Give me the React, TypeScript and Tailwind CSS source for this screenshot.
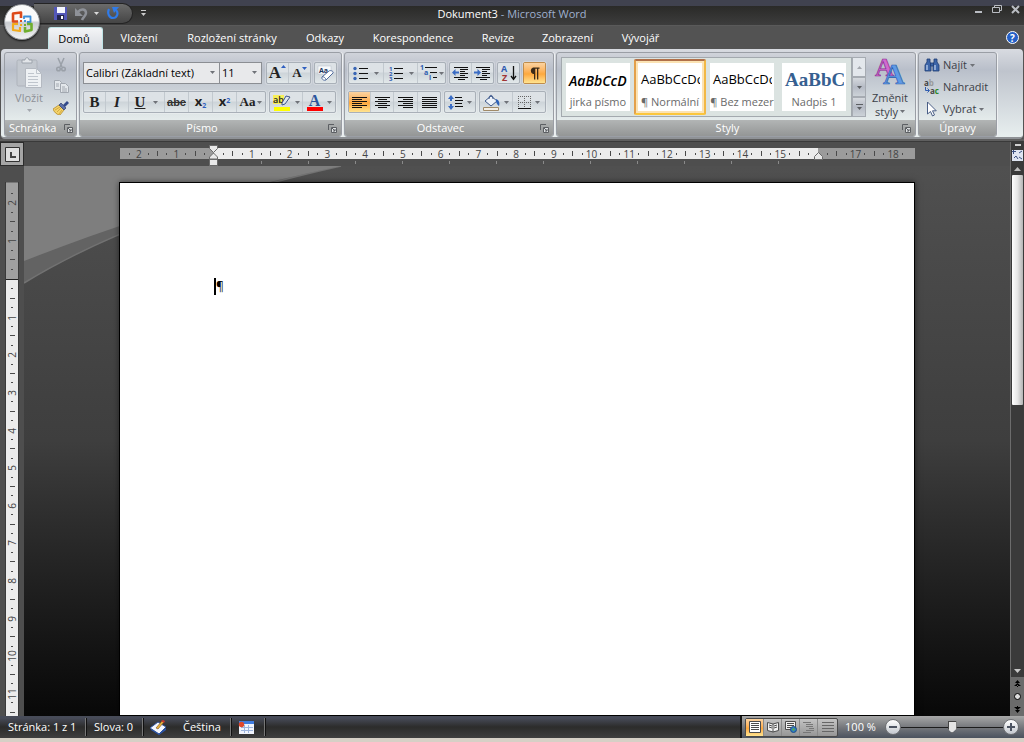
import type { ReactNode } from "react";
import clsx from "clsx";

const TABS = ["Domů", "Vložení", "Rozložení stránky", "Odkazy", "Korespondence", "Revize", "Zobrazení", "Vývojář"];
const TAB_WIDTHS = ["w-[55px]", "w-[75px]", "w-[111px]", "w-[75px]", "w-[101px]", "w-[69px]", "w-[70px]", "w-[76px]"];

const BTN_GROUP = "flex h-[22px] rounded-[2px] border border-[#a9b0b8] bg-linear-to-b from-[#dde2e6] from-45% via-[#cdd4d9] via-50% to-[#e2e8ea] shadow-[0_0_0_1px_rgba(255,255,255,0.25)]";
const ACTIVE = "bg-linear-to-b from-[#fbd3a0] via-[#fda83c] via-55% to-[#ffe48f]";

function Arrow({ className = "fill-[#6f7278]" }: { className?: string }) {
  return (
    <svg width="5" height="3" viewBox="0 0 5 3" className={clsx("shrink-0", className)}>
      <path d="M0 0h5L2.500 3z" />
    </svg>
  );
}

function Btn({ label, w, active, arrow, last, children }: { label: string; w: string; active?: boolean; arrow?: boolean; last?: boolean; children: ReactNode }) {
  return (
    <button
      aria-label={label}
      title={label}
      className={clsx("flex h-full shrink-0 items-center justify-center gap-1", w, !last && "border-r border-[#c2c9cf]", active && ACTIVE)}
    >
      {children}
      {arrow && <Arrow />}
    </button>
  );
}

function Group({ title, className, launcher = true, children }: { title: string; className: string; launcher?: boolean; children: ReactNode }) {
  return (
    <section className={clsx("flex shrink-0 flex-col overflow-hidden rounded-[3px] border border-[#9a9ea5] bg-linear-to-b from-[#d0d3da] from-0% via-[#b9bfca] via-20% to-[#e4ebeb] to-80% shadow-[1px_0_0_#eef0f2]", className)}>
      <div className="min-h-0 flex-1">{children}</div>
      <div className="flex h-4 items-center bg-linear-to-b from-[#b2b5b5] to-[#949696] px-1 text-white">
        <span className={clsx("flex-1 text-center", launcher && "pr-2")}>{title}</span>
        {launcher && (
          <button aria-label={`${title} – další možnosti`}>
            <svg width="9" height="9" viewBox="0 0 9 9" fill="none" stroke="#5c5f63">
              <path d="M.5 6V.5H6" />
              <path d="M3.500 3.500h5v5h-5z" fill="#dfe2e4" />
              <path d="M4 4l3 3M7 5v2H5" />
            </svg>
          </button>
        )}
      </div>
    </section>
  );
}

function Lines({ widths, align = "left" }: { widths: number[]; align?: "left" | "center" | "right" }) {
  return (
    <svg width="15" height="13" viewBox="0 0 15 13" fill="#111" shapeRendering="crispEdges">
      {widths.map((w, i) => (
        <rect key={i} x={align === "left" ? 0 : align === "right" ? 15 - w : Math.floor((15 - w) / 2)} y={i * 2 + 1} width={w} height="1" />
      ))}
    </svg>
  );
}

function ListIcon({ marks }: { marks: string[] }) {
  return (
    <svg width="15" height="15" viewBox="0 0 15 15" className="overflow-visible">
      {marks.map((m, i) =>
        m === "•" ? (
          <circle key={i} cx="2" cy={2.5 + i * 5} r="1.700" fill="#3a66b5" />
        ) : (
          <text key={i} x="1" y={5 + i * 5} fontSize="6" fontWeight="700" fill="#2f5cb0">{m}</text>
        )
      )}
      <path d="M6 2.500h9M6 7.500h9M6 12.500h9" stroke="#111" />
    </svg>
  );
}

function IndentIcon({ right }: { right?: boolean }) {
  return (
    <svg width="17" height="15" viewBox="0 0 17 15">
      <path d="M2 1.500h14M8 3.500h8M8 5.500h5M8 7.500h8M8 9.500h5M2 11.500h14M6 13.500h7" stroke="#111" />
      <path d={right ? "M7 6.500L3.500 3v2.500H0v2h3.500V10z" : "M0 6.500L3.500 3v2.500H7v2H3.500V10z"} fill="#3a6cc4" />
    </svg>
  );
}

function ClipboardGroup() {
  return (
    <Group title="Schránka" className="w-[73px]">
      <div className="flex h-full">
        <button className="flex w-12 flex-col items-center pt-1 text-[#8d9096]">
          <svg width="28" height="32" viewBox="0 0 28 32">
            <rect x="2" y="3" width="20" height="26" rx="1.500" fill="#c3c8cf" stroke="#aeb3bb" />
            <path d="M7 6V3h3c0-3 4-3 4 0h3v3z" fill="#e2e5e9" stroke="#9da3ac" />
            <path d="M10.500 11.500h11l5 5v14h-16z" fill="#eef1f4" stroke="#b4b9c1" />
            <path d="M21.500 11.500v5h5M13 16.500h6M13 19.500h10M13 22.500h10M13 25.500h10M13 28.500h10" fill="none" stroke="#bfc5cd" />
          </svg>
          <span className="mt-[2px] leading-[14px]">Vložit</span>
          <Arrow className="mt-1 fill-[#a3a7ad]" />
        </button>
        <div className="flex flex-col items-center gap-2 pt-1">
          <button aria-label="Vyjmout">
            <svg width="14" height="15" viewBox="0 0 14 15" fill="none" stroke="#9aa0a8" strokeWidth="1.500">
              <path d="M4 1l4 9M10 1L6 10" />
              <circle cx="4.500" cy="12" r="1.800" />
              <circle cx="9.500" cy="12" r="1.800" />
            </svg>
          </button>
          <button aria-label="Kopírovat">
            <svg width="15" height="13" viewBox="0 0 15 13" fill="#e3e7eb" stroke="#a2a8b0">
              <path d="M.5.5h5l2 2v7h-7z" />
              <path d="M6.500 3.500h5l3 3v6h-8zM8 7h3M8 9h5M8 11h5M2 4h3M2 6h3" />
            </svg>
          </button>
          <button aria-label="Kopírovat formát">
            <svg width="16" height="14" viewBox="0 0 16 14">
              <path d="M0 8l6-4 5 5-4 5c-3 0-6-3-7-6z" fill="#f3d36b" stroke="#b58a28" strokeWidth=".8" />
              <path d="M2 9l5-3M4 11l4-4M6 13l3-4" stroke="#c7982f" strokeWidth=".7" />
              <path d="M6 4l2-2 5 5-2 2z" fill="#5b6fa8" stroke="#2f3f70" strokeWidth=".7" />
              <path d="M10 4l4-4 2 2-4 4z" fill="#324a8a" />
            </svg>
          </button>
        </div>
      </div>
    </Group>
  );
}

function Combo({ label, value, className }: { label: string; value: string; className: string }) {
  return (
    <div className={clsx("relative h-[22px] border border-[#8b8e93] bg-[#e8e9eb]", className)}>
      <select aria-label={label} className="h-full w-full appearance-none bg-transparent pl-[2px] text-[11px] text-black outline-none">
        <option>{value}</option>
      </select>
      <span className="pointer-events-none absolute top-2 right-1"><Arrow /></span>
    </div>
  );
}

function FontGroup() {
  const serif = "font-['Liberation_Serif',serif] font-bold text-[#222]";
  return (
    <Group title="Písmo" className="w-[263px]">
      <div className="flex flex-col gap-[7px] px-[3px] pt-[9px]">
        <div className="flex">
          <Combo label="Písmo" value="Calibri (Základní text)" className="w-[137px]" />
          <Combo label="Velikost písma" value="11" className="-ml-px mr-1 w-[43px]" />
          <div className={clsx(BTN_GROUP, "mr-[3px]")}>
            <Btn label="Zvětšit písmo" w="w-[22px]">
              <span className={clsx(serif, "flex text-[17px] leading-5")}>A<svg width="5" height="3" viewBox="0 0 5 3" className="mt-[2px]"><path d="M0 3h5L2.500 0z" fill="#2f5fc0" /></svg></span>
            </Btn>
            <Btn label="Zmenšit písmo" w="w-[21px]" last>
              <span className={clsx(serif, "flex text-[13px] leading-5")}>A<Arrow className="mt-1 fill-[#2f5fc0]" /></span>
            </Btn>
          </div>
          <div className={BTN_GROUP}>
            <Btn label="Vymazat formátování" w="w-[21px]" last>
              <svg width="18" height="17" viewBox="0 0 18 17" className="overflow-visible">
                <rect x="1" y="1" width="13" height="8" fill="#f7f9fb" stroke="#b9c0c9" strokeWidth=".5" />
                <text x="2" y="8" fontSize="7" fontWeight="700" fill="#1e355f">Aa</text>
                <path d="M5 12l7-6c1-1 5 0 4 2l-7 7c-2 1-5-1-4-3z" fill="#fff" stroke="#4f6a9c" />
                <path d="M5 12c1-1 4 1 4 3" fill="none" stroke="#4f6a9c" />
              </svg>
            </Btn>
          </div>
        </div>
        <div className="flex gap-[3px]">
          <div className={BTN_GROUP}>
            <Btn label="Tučné" w="w-[22px]"><span className={clsx(serif, "text-[15px]")}>B</span></Btn>
            <Btn label="Kurzíva" w="w-[23px]"><span className={clsx(serif, "text-[15px] italic")}>I</span></Btn>
            <Btn label="Podtržené" w="w-[36px]" arrow><span className={clsx(serif, "mr-1 text-[15px] underline")}>U</span></Btn>
            <Btn label="Přeškrtnuté" w="w-[24px]"><span className="font-['Liberation_Sans',sans-serif] text-[11px] font-bold text-[#333] line-through">abc</span></Btn>
            <Btn label="Dolní index" w="w-[24px]"><span className="text-[13px] font-bold text-[#222]">x<sub className="text-[7px] text-[#2f5fc0]">2</sub></span></Btn>
            <Btn label="Horní index" w="w-[24px]"><span className="text-[13px] font-bold text-[#222]">x<sup className="text-[7px] text-[#2f5fc0]">2</sup></span></Btn>
            <button aria-label="Velikost písmen" className="flex w-[28px] items-center justify-center gap-[2px]">
              <span className={clsx(serif, "text-[13px]")}>Aa</span><Arrow />
            </button>
          </div>
          <div className={BTN_GROUP}>
            <Btn label="Barva zvýraznění textu" w="w-[33px]" arrow>
              <svg width="18" height="17" viewBox="0 0 18 17" className="overflow-visible">
                <rect x="0" y="1" width="11" height="9" fill="#f7ef57" />
                <text x="0" y="9" fontSize="9" fontWeight="600" fill="#222">ab</text>
                <path d="M9 9l4-7 4 1-5 7-3 1z" fill="#dfe6ee" stroke="#41588a" />
                <rect x="1" y="13" width="16" height="4" fill="#ff0" />
              </svg>
            </Btn>
            <Btn label="Barva písma" w="w-[32px]" arrow last>
              <span className="flex flex-col items-center">
                <span className="font-['Liberation_Serif',serif] text-[16px] leading-[13px] font-bold text-[#2c559d]">A</span>
                <span className="h-1 w-4 bg-[#f00]" />
              </span>
            </Btn>
          </div>
        </div>
      </div>
    </Group>
  );
}

function ParagraphGroup() {
  return (
    <Group title="Odstavec" className="w-[210px]">
      <div className="flex flex-col gap-[7px] px-[3px] pt-[9px]">
        <div className="flex gap-[3px]">
          <div className={BTN_GROUP}>
            <Btn label="Odrážky" w="w-[35px]" arrow><span className="mr-[2px]"><ListIcon marks={["•", "•", "•"]} /></span></Btn>
            <Btn label="Číslování" w="w-[34px]" arrow><span className="mr-[2px]"><ListIcon marks={["1", "2", "3"]} /></span></Btn>
            <button aria-label="Víceúrovňový seznam" className="flex w-[27px] items-center justify-center">
              <svg width="19" height="16" viewBox="0 0 19 16" fill="#2f5cb0" fontSize="7" fontWeight="700" className="overflow-visible">
                <text x="0" y="5">1</text>
                <text x="4" y="10">a</text>
                <text x="9" y="15">i</text>
                <path d="M5 2.500h12M10 7.500h7M13 12.500h4" stroke="#111" />
              </svg>
              <Arrow />
            </button>
          </div>
          <div className={BTN_GROUP}>
            <Btn label="Zmenšit odsazení" w="w-[22px]"><IndentIcon /></Btn>
            <Btn label="Zvětšit odsazení" w="w-[21px]" last><IndentIcon right /></Btn>
          </div>
          <div className={BTN_GROUP}>
            <Btn label="Seřadit" w="w-[21px]" last>
              <svg width="16" height="18" viewBox="0 0 16 18" fontSize="9" fontWeight="700" className="overflow-visible">
                <text x="0" y="8" fill="#2f5cb0">A</text>
                <text x="1" y="17" fill="#a03434">Z</text>
                <path d="M12.500 2v12M10 12l2.500 3.500L15 12" fill="none" stroke="#111" strokeWidth="1.300" />
              </svg>
            </Btn>
          </div>
          <div className={clsx(BTN_GROUP, "border-[#c08c4a]")}>
            <Btn label="Zobrazit vše" w="w-[21px]" active last>
              <svg width="11" height="13" viewBox="0 0 11 13">
                <path d="M10.500.500H4a3.500 3.500 0 000 6.500h1v5.500h1.300V1.700h1.700v10.800h1.300V1.700h1.200z" fill="#3a2a18" />
              </svg>
            </Btn>
          </div>
        </div>
        <div className="flex gap-[3px]">
          <div className={BTN_GROUP}>
            <Btn label="Zarovnat vlevo" w="w-[22px]" active><Lines widths={[15, 10, 15, 10, 15, 10]} /></Btn>
            <Btn label="Na střed" w="w-[23px]"><Lines widths={[15, 9, 15, 9, 15, 9]} align="center" /></Btn>
            <Btn label="Zarovnat vpravo" w="w-[24px]"><Lines widths={[15, 10, 15, 10, 15, 10]} align="right" /></Btn>
            <Btn label="Do bloku" w="w-[22px]" last><Lines widths={[15, 15, 15, 15, 15, 15]} /></Btn>
          </div>
          <div className={BTN_GROUP}>
            <Btn label="Řádkování" w="w-[30px]" arrow last>
              <svg width="15" height="17" viewBox="0 0 15 17">
                <path d="M3 1l3 4H4v2H2V5H0zM3 16l3-4H4v-2H2v2H0z" fill="#3a6cc4" />
                <path d="M7 3.500h7M7 6.500h8M7 9.500h7M7 12.500h8" stroke="#111" />
              </svg>
            </Btn>
          </div>
          <div className={BTN_GROUP}>
            <Btn label="Stínování" w="w-[33px]" arrow>
              <svg width="17" height="17" viewBox="0 0 17 17">
                <path d="M2 7l6-5 6 5-6 5z" fill="#eef3fa" stroke="#3f5a8c" />
                <path d="M6 5c0-5 4-5 4 0" fill="none" stroke="#3f5a8c" />
                <path d="M13 5c3 1 4 4 3 7-2-1-2-3-3-4z" fill="#2f62b8" />
                <path d="M.5 13.500h15v3H.5z" fill="#f3eee6" stroke="#a08a68" />
              </svg>
            </Btn>
            <Btn label="Ohraničení" w="w-[32px]" arrow last>
              <svg width="13" height="13" viewBox="0 0 13 13" stroke="#666" fill="none">
                <path d="M0 .500h13M0 6.500h13M.5 0v12M6.500 0v12M12.500 0v12" strokeDasharray="1 1" />
                <path d="M0 12.500h13" stroke="#111" />
              </svg>
            </Btn>
          </div>
        </div>
      </div>
    </Group>
  );
}

const STYLES = [
  { name: "jirka písmo", sample: "AaBbCcD", font: "text-[14px] font-semibold italic text-black" },
  { name: "¶ Normální", sample: "AaBbCcDc", font: "text-[13px] text-black", selected: true },
  { name: "¶ Bez mezer", sample: "AaBbCcDc", font: "text-[13px] text-black" },
  { name: "Nadpis 1", sample: "AaBbCc", font: "font-['Liberation_Serif',serif] text-[19px] font-bold text-[#365f91]" },
];

function StylesGroup() {
  return (
    <Group title="Styly" className="w-[360px]">
      <div className="flex h-full pt-1 pl-1">
        <div className="flex h-[60px] w-[291px] items-center border border-[#a3a9ae] bg-[#dbe3e1]">
          {STYLES.map((s) => (
            <div key={s.name} className={clsx("flex w-[72px] justify-center", s.selected && "h-[56px] rounded-[2px] border-2 border-t-[#b0704a] border-r-[#f2b845] border-b-[#fbc63c] border-l-[#e3a04a] bg-[#fbe3b4] p-[2px]")}>
              <button className="flex h-12 w-16 flex-col overflow-hidden bg-white text-[#6a6a6a]">
                <span className={clsx("flex h-8 w-[62px] items-center overflow-hidden pt-[2px] pl-[3px]", s.font)}>{s.sample}</span>
                <span className="w-full text-center leading-[14px] whitespace-nowrap">{s.name}</span>
              </button>
            </div>
          ))}
        </div>
        <div className="flex h-[60px] w-[14px] flex-col">
          {["Nahoru", "Dolů", "Více"].map((l, i) => (
            <button key={l} aria-label={l} className={clsx("flex flex-1 flex-col items-center justify-center gap-[2px] border border-[#a6abb2]", i === 0 ? "bg-[#e3e7ec]" : "bg-linear-to-b from-[#d5d9de] via-[#b6bbc5] to-[#ccd2d8]")}>
              {i === 2 && <span className="h-px w-[7px] bg-[#5c5f63]" />}
              <Arrow className={i === 0 ? "rotate-180 fill-[#a3a7ad]" : "fill-[#5c5f63]"} />
            </button>
          ))}
        </div>
        <button className="ml-[2px] flex w-[44px] flex-col items-center text-[#3c4148]">
          <svg width="30" height="30" viewBox="0 0 30 30" fontFamily="Liberation Serif, serif" fontWeight="700" className="overflow-visible">
            <text x="0" y="19" fontSize="26" fill="#d169cf" stroke="#8c2f92" strokeWidth=".7">A</text>
            <text x="8" y="27" fontSize="30" fill="#5f9ae6" stroke="#2b5cae" strokeWidth=".7">A</text>
          </svg>
          <span className="mt-1 leading-[14px]">Změnit</span>
          <span className="flex items-center gap-[2px] leading-[13px]">styly <Arrow /></span>
        </button>
      </div>
    </Group>
  );
}

function EditingGroup() {
  const row = "flex h-[22px] items-center gap-[3px] text-[#3c4148]";
  return (
    <Group title="Úpravy" className="w-[79px]" launcher={false}>
      <div className="flex flex-col pt-px pl-[5px]">
        <button className={row}>
          <svg width="16" height="14" viewBox="0 0 16 14" fill="#3d65a8" stroke="#1f3d73" strokeWidth=".8">
            <path d="M3 1h3v3l1 2v7H1V7l2-3zM10 1h3v3l2 3v6H9V6l1-2z" />
            <path d="M6.500 5h3v3h-3z" />
            <path d="M3 7v5M11 7v5" stroke="#c7d8f2" strokeWidth="1.200" />
          </svg>
          Najít <Arrow />
        </button>
        <button className={row}>
          <svg width="16" height="16" viewBox="0 0 16 16" fontSize="8" fontWeight="700" className="overflow-visible">
            <text x="0" y="7" fill="#444">a<tspan fill="#999">b</tspan></text>
            <text x="6" y="15" fill="#444">a<tspan fill="#2a8a2a">c</tspan></text>
            <path d="M1.500 8v3.500H5M3.500 9.500l2 2-2 2" fill="none" stroke="#2f5cb0" />
          </svg>
          Nahradit
        </button>
        <button className={row}>
          <svg width="16" height="16" viewBox="0 0 16 16">
            <path d="M3.500 1v12l3-2.500 2 4.500 2-1-2-4.200h3.800z" fill="#fff" stroke="#4a5f86" />
          </svg>
          Vybrat <Arrow />
        </button>
      </div>
    </Group>
  );
}

// Quarter-centimetre marks: a number on whole units, a line on halves, a dot otherwise
function marks(from: number, to: number) {
  const out: ReactNode[] = [];
  for (let q = from * 4 + 1; q < to * 4; q++) {
    out.push(
      <span key={q} className="flex size-0 items-center justify-center">
        {q % 4 === 0 ? (
          <span className="text-[10px] leading-none">{Math.abs(q / 4)}</span>
        ) : (
          <span className={clsx("w-px shrink-0 bg-[#4a4a4a]", q % 2 === 0 ? "h-[5px]" : "h-[2px]")} />
        )}
      </span>
    );
  }
  return out;
}

function HorizontalRuler() {
  return (
    <div className="flex h-6 bg-[#4e4e4e]">
      <button aria-label="Levý tabulátor" className="flex w-6 shrink-0 items-center justify-center border border-[#2c2c2c] bg-[#a5a5a5]">
        <svg width="15" height="15" viewBox="0 0 15 15">
          <path d="M.5.500h14v14H.5z" fill="#e0e0e0" stroke="#333" />
          <path d="M6 5v5h5" fill="none" stroke="#444" strokeWidth="2" />
        </svg>
      </button>
      <div className="min-w-0 flex-1 overflow-hidden pt-[6px]">
        <div className="mx-auto w-[796px]">
          <div className="flex h-[11px] pl-px text-[#444]">
            <div className="flex w-[94px] items-center justify-evenly bg-[#9b9b9b]">{marks(-2.5, 0)}</div>
            <div className="relative flex w-[604px] items-center justify-evenly bg-[#ececec]">
              {marks(0, 16)}
              <svg width="9" height="21" viewBox="0 0 9 21" className="absolute -top-[3px] -left-[5px]" fill="#e9e9e9" stroke="#6a6a6a">
                <path d="M.5.500h8v3l-4 4-4-4zM4.500 8l4 4v2h-8v-2zM.5 14.500h8v6h-8z" />
              </svg>
              <svg width="9" height="8" viewBox="0 0 9 8" className="absolute -right-[5px] -bottom-[1px]" fill="#e9e9e9" stroke="#6a6a6a">
                <path d="M4.500.500l4 4v3h-8v-3z" />
              </svg>
            </div>
            <div className="flex flex-1 items-center justify-evenly bg-[#9b9b9b] pr-[3px]">{marks(16, 18.5)}</div>
          </div>
          <div className="flex gap-[46px] pt-[2px] pl-[142px]">
            {Array.from({ length: 12 }, (_, i) => <span key={i} className="h-[3px] w-px bg-[#8a8a8a]" />)}
          </div>
        </div>
      </div>
    </div>
  );
}

function verticalMarks(from: number, to: number) {
  return marks(from, to).map((m, i) => <span key={i} className="size-0 -rotate-90">{m}</span>);
}

function VerticalRuler() {
  return (
    <div className="w-6 shrink-0 overflow-hidden bg-[#4e4e4e] pt-4 pl-[5px]">
      <div className="flex w-[14px] flex-col border-x border-[#3a3a3a] text-[#444]">
        <div className="flex h-[97px] shrink-0 flex-col items-center justify-evenly border-t border-[#777] bg-[#a0a0a0] pt-px">{verticalMarks(-2.5, 0)}</div>
        <div className="flex h-[943px] shrink-0 flex-col items-center justify-evenly border-t border-[#222] bg-[#ececec]">{verticalMarks(0, 25)}</div>
      </div>
    </div>
  );
}

function ScrollColumn() {
  return (
    <div className="flex w-[14px] shrink-0 flex-col border-l border-[#6c6c6c] bg-[#3a3a3a]">
      <button aria-label="Rozdělit" className="flex h-[6px] items-center justify-center"><span className="h-[2px] w-[6px] bg-[#d0d0d0]" /></button>
      <button aria-label="Pravítko" className="flex h-[14px] items-center justify-center">
        <svg width="11" height="11" viewBox="0 0 11 11">
          <rect width="11" height="11" fill="#dfe5f2" />
          <path d="M0 1.500h4M1.500 0v4M7 3l3-2M2 8l2-2 2 3M7 7l3 2" stroke="#3b4f80" fill="none" />
        </svg>
      </button>
      <button aria-label="Nahoru" className="flex h-[13px] items-center justify-center">
        <svg width="7" height="4" viewBox="0 0 7 4"><path d="M0 4h7L3.500 0z" fill="#bdbdbd" /></svg>
      </button>
      <div className="min-h-0 flex-1 px-px">
        <div className="h-[47%] rounded-[1px] bg-linear-to-r from-white via-[#e6e6e6] to-[#b5b5b5]" />
      </div>
      <button aria-label="Dolů" className="flex h-[13px] items-center justify-center">
        <svg width="7" height="4" viewBox="0 0 7 4"><path d="M0 0h7L3.500 4z" fill="#c8c8c8" /></svg>
      </button>
      <div className="flex h-[39px] flex-col items-center justify-around bg-[#6b6b6b]">
        <button aria-label="Předchozí stránka"><svg width="7" height="7" viewBox="0 0 7 7" className="block"><path d="M1 3h5L3.500 0zM0 6h7L3.500 3zM3 5h1v2H3z" /></svg></button>
        <button aria-label="Vybrat objekt"><span className="block size-[7px] rounded-full border border-black bg-[#ddd]" /></button>
        <button aria-label="Další stránka"><svg width="7" height="7" viewBox="0 0 7 7" className="block"><path d="M0 1h7L3.500 4zM1 4h5L3.500 7zM3 0h1v2H3z" /></svg></button>
      </div>
    </div>
  );
}

function TitleBar() {
  return (
    <header className="grid h-[26px] shrink-0 grid-cols-[1fr_auto_1fr] border-b border-[#5a5a5a] bg-linear-to-b from-[#40424f] from-22% via-[#2a2a28] via-24% to-[#3d3d3d]">
      <div className="flex items-center pl-[34px]">
        <div className="mt-[2px] flex h-[21px] w-[99px] items-center gap-2 rounded-r-full border border-l-0 border-[#242424] bg-linear-to-b from-[#6b6b6b] to-[#454545] pl-5">
          <button aria-label="Uložit">
            <svg width="13" height="13" viewBox="0 0 13 13">
              <path d="M0 0h13v13H0z" fill="#5357b8" />
              <path d="M3 0h8v6H3z" fill="#f4f6ff" />
              <path d="M3 8h7v5H3z" fill="#23264f" />
              <path d="M7 9h2v3H7z" fill="#fff" />
            </svg>
          </button>
          <div className="flex items-center gap-1">
            <button aria-label="Zpět">
              <svg width="13" height="14" viewBox="0 0 13 14">
                <path d="M3 5c3-4 8-3 8 1 0 3-3 4-4 7" fill="none" stroke="#8e9198" strokeWidth="2.500" />
                <path d="M0 1v8h8z" fill="#8e9198" />
              </svg>
            </button>
            <Arrow className="ml-[2px] fill-[#d9d9d9]" />
          </div>
          <button aria-label="Opakovat">
            <svg width="12" height="13" viewBox="0 0 12 13">
              <path d="M2 2c-2 4 0 9 4 9s6-5 3-8" fill="none" stroke="#2f7bea" strokeWidth="2.200" />
              <path d="M5 0h7L7 6z" fill="#2f7bea" />
            </svg>
          </button>
        </div>
        <button aria-label="Přizpůsobit panel nástrojů" className="ml-2 flex flex-col items-center gap-[2px]">
          <span className="h-px w-[5px] bg-[#ccc]" />
          <Arrow className="fill-[#ccc]" />
        </button>
      </div>
      <h1 className="pt-[6px] leading-4 text-[#9fb0cf]"><span className="text-white">Dokument3</span> - Microsoft Word</h1>
      <div className="flex items-start justify-end gap-[9px] pt-[5px] pr-1 text-[#b9bcc2]">
        <button aria-label="Minimalizovat"><svg width="8" height="9" viewBox="0 0 8 9"><path d="M0 7h7" stroke="currentColor" strokeWidth="2" /></svg></button>
        <button aria-label="Obnovit"><svg width="10" height="9" viewBox="0 0 10 9" fill="none" stroke="currentColor"><path d="M2.500 2V.500h7v5H8M.5 2.500h7v5h-7z" /></svg></button>
        <button aria-label="Zavřít"><svg width="9" height="9" viewBox="0 0 9 9"><path d="M1 1l7 7M8 1L1 8" stroke="currentColor" strokeWidth="2" /></svg></button>
      </div>
    </header>
  );
}

function OfficeButton() {
  return (
    <button aria-label="Tlačítko Office" className="absolute top-1 left-1 z-10 flex size-9 items-center justify-center rounded-full border border-[#8f9296] bg-linear-to-b from-[#fafafa] from-45% via-[#c9ccd0] via-52% to-[#f2f2f2] shadow-[0_1px_2px_#111]">
      <svg width="24" height="24" viewBox="0 0 24 24" fill="none" strokeLinejoin="round">
        <path d="M11 8V2.500L3 3.500v8h5" stroke="#dd4a1a" strokeWidth="2.600" />
        <path d="M14 9V6.500h6.500V12H17" stroke="#3f8fd8" strokeWidth="1.800" />
        <path d="M8 14H3v6l7 1v-4" stroke="#f2ab1c" strokeWidth="2.200" />
        <path d="M17 14h4.500v6L15 21.500V17" stroke="#6fae2e" strokeWidth="2.600" />
        <path d="M10 10h2v2h-2z" fill="#dd4a1a" />
        <path d="M14 10h2v2h-2z" fill="#3f8fd8" />
        <path d="M10 14h2v2h-2z" fill="#f2ab1c" />
        <path d="M14 14h2v2h-2z" fill="#6fae2e" />
      </svg>
    </button>
  );
}

const VIEWS = ["Rozložení při tisku", "Čtení na celé obrazovce", "Rozložení webové stránky", "Osnova", "Koncept"];

function ViewIcon({ index }: { index: number }) {
  return (
    <svg width="12" height="12" viewBox="0 0 12 12" fill="none" stroke="#4c4c4c">
      {index === 0 && <path d="M.5.500h11v11H.5zM2 2.500h8M2 4.500h8M2 6.500h8M2 8.500h8" fill="#fff" />}
      {index === 1 && <path d="M.5 1.500L6 3l5.500-1.500v8L6 11 .5 9.500zM6 3v8M2 4l3 1M2 6l3 1M7 5l3-1M7 7l3-1" fill="#f2f2f2" />}
      {index === 2 && (
        <>
          <path d="M.5.500h10v8H.5zM2 2.500h7M2 4.500h7M2 6.500h4" fill="#f2f2f2" />
          <circle cx="8.500" cy="8.500" r="3" fill="#2f78c8" stroke="#205080" />
          <path d="M7 8l2-1 1 2-2 1z" fill="#55b04a" stroke="none" />
        </>
      )}
      {index === 3 && <path d="M0 1.500h8M3 3.500h7M3 5.500h7M6 7.500h5M3 9.500h8M0 11.500h8" stroke="#777" />}
      {index === 4 && <path d="M0 1.500h12M0 4.500h12M0 7.500h12M0 10.500h12" stroke="#666" />}
    </svg>
  );
}

function StatusBar() {
  const cell = "flex h-[18px] items-center border-r border-[#777] shadow-[1px_0_0_#111]";
  const round = "flex size-4 shrink-0 items-center justify-center rounded-full border border-[#6e7074] bg-linear-to-b from-white to-[#c4c8cf]";
  return (
    <footer className="shrink-0 border-b-4 border-[#d6d0c6] text-white">
      <div className="flex h-[22px] items-center bg-linear-to-b from-[#474b58] from-10% via-[#2c2c2b] via-50% to-[#3f3f3f]">
        <button className={clsx(cell, "w-[86px] pl-2")}>Stránka: 1 z 1</button>
        <button className={clsx(cell, "w-[57px] pl-2")}>Slova: 0</button>
        <button aria-label="Kontrola pravopisu" className="flex w-[31px] justify-center">
          <svg width="17" height="15" viewBox="0 0 17 15">
            <path d="M0 8l8-6 8 5-7 7z" fill="#f4f7ff" stroke="#33559c" />
            <path d="M1 9l8 5 7-6v2l-7 5-8-5z" fill="#2c57b0" />
            <path d="M6 8l6-7 2 1-6 7z" fill="#e9b43c" stroke="#7a4a20" strokeWidth=".6" />
            <path d="M11 1l2-1 2 1-1 2z" fill="#c8382c" />
          </svg>
        </button>
        <button className={clsx(cell, "w-[57px] pl-[9px]")}>Čeština</button>
        <button aria-label="Záznam makra" className={clsx(cell, "w-[34px] pl-[7px]")}>
          <svg width="16" height="13" viewBox="0 0 16 13">
            <path d="M1 0h15v13H1z" fill="#f0f4fc" />
            <path d="M1 0h15v3H1z" fill="#3f7ce0" />
            <path d="M3 6.500h12M3 9.500h12M6.500 4v8M10.500 4v8" stroke="#9db4dc" />
            <circle cx="3.500" cy="3.500" r="2.700" fill="#e0482c" />
          </svg>
        </button>
        <div className="flex-1" />
        <div className="flex h-full w-[284px] items-center border-l-2 border-[#151515] bg-linear-to-b from-[#a8a8a8] via-[#77797d] to-[#4b525e] pl-[3px]">
          <div className="flex h-[19px] rounded-[2px] border border-[#4a4a4a] bg-linear-to-b from-[#c4c4c4] to-[#969696]">
            {VIEWS.map((v, i) => (
              <button key={v} aria-label={v} className={clsx("flex items-center justify-center", i === 4 ? "w-[19px]" : "w-[18px] border-r border-[#8a8a8a]", i === 0 && ACTIVE)}>
                <ViewIcon index={i} />
              </button>
            ))}
          </div>
          <button className="ml-px w-[43px] text-center">100 %</button>
          <button aria-label="Oddálit" className={clsx(round, "ml-[3px]")}><span className="h-[2px] w-2 bg-[#4d5462]" /></button>
          <input
            type="range"
            aria-label="Lupa"
            min={0}
            max={200}
            defaultValue={100}
            className="h-4 min-w-0 flex-1 appearance-none bg-transparent bg-[linear-gradient(#1c1c1c,#1c1c1c)] bg-[length:100%_1px] bg-center bg-no-repeat [&::-webkit-slider-thumb]:h-3 [&::-webkit-slider-thumb]:w-[9px] [&::-webkit-slider-thumb]:appearance-none [&::-webkit-slider-thumb]:border [&::-webkit-slider-thumb]:border-[#444] [&::-webkit-slider-thumb]:bg-[#e4e4e4] [&::-webkit-slider-thumb]:[clip-path:polygon(0_0,100%_0,100%_65%,50%_100%,0_65%)]"
          />
          <button aria-label="Přiblížit" className={clsx(round, "mr-[5px]")}>
            <svg width="8" height="8" viewBox="0 0 8 8"><path d="M4 0v8M0 4h8" stroke="#4d5462" strokeWidth="2" /></svg>
          </button>
        </div>
      </div>
    </footer>
  );
}

export default function App() {
  return (
    <div className="relative flex h-screen flex-col overflow-hidden bg-[#535353] font-['Open_Sans','Noto_Sans',sans-serif] text-[11px]">
      <TitleBar />
      <OfficeButton />

      <nav className="flex h-[23px] shrink-0 items-end pr-[5px] pl-12">
        {TABS.map((t, i) => (
          <button key={t} className={clsx("h-[22px] shrink-0 pt-px pr-[3px] text-center", TAB_WIDTHS[i], i === 0 ? "rounded-t-[3px] border border-b-0 border-[#bfe4e6] bg-linear-to-b from-[#f4f5f7] to-[#d8dbe1] text-black" : "text-white")}>
            {t}
          </button>
        ))}
        <div className="flex-1" />
        <button aria-label="Nápověda" className="mb-[5px] flex size-[13px] items-center justify-center rounded-full border border-white bg-[#2460c8] text-[10px] leading-none font-bold text-white">?</button>
      </nav>

      <div className="mx-px flex h-[90px] shrink-0 gap-[2px] rounded-[4px] border-b-2 border-[#8f9296] bg-linear-to-b from-[#d8dbe1] via-[#bfc4cd] via-25% to-[#e8efef] px-[3px] pt-[3px]">
        <ClipboardGroup />
        <FontGroup />
        <ParagraphGroup />
        <StylesGroup />
        <EditingGroup />
      </div>
      <div className="h-[3px] shrink-0 border-b border-[#3a3a3a] bg-[#5f5f5f]" />

      <div className="flex min-h-0 flex-1">
        <div className="flex min-w-0 flex-1 flex-col">
          <HorizontalRuler />
          <div className="flex min-h-0 flex-1">
            <VerticalRuler />
            <main className="relative min-w-0 flex-1 overflow-hidden bg-linear-to-b from-[#505050] via-[#3e3e3e] via-50% to-[#080808] pt-4">
              <svg width="330" height="120" viewBox="0 0 330 120" className="absolute top-0 left-0">
                <path d="M0 0h317C200 26 90 62 0 117z" fill="#636363" />
                <path d="M0 117C90 62 200 26 317 0" fill="none" stroke="#727272" strokeWidth="1.500" />
                <path d="M0 0h317C200 24 100 56 0 95z" fill="#7e7e7e" />
              </svg>
              <div className="relative mx-auto h-full w-[796px] border border-black bg-white pt-[95px] pl-[94px] shadow-[0_0_6px_rgba(0,0,0,0.5)]">
                <p className="flex items-center text-black">
                  <span className="h-[17px] w-[2px] bg-black" />
                  <span className="text-[12px] leading-[17px]">¶</span>
                </p>
              </div>
            </main>
          </div>
        </div>
        <ScrollColumn />
      </div>

      <StatusBar />
    </div>
  );
}
